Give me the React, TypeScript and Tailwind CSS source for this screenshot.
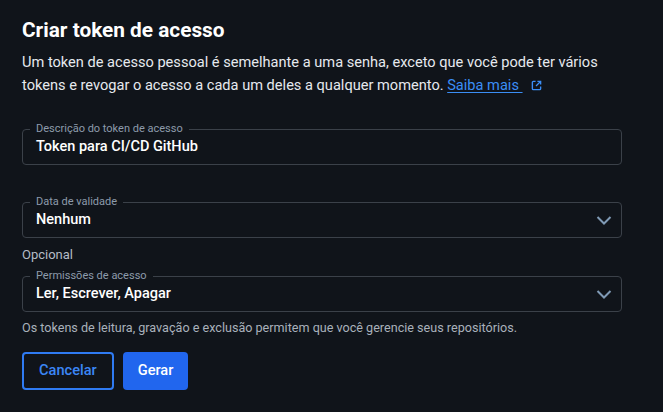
import type { ReactNode } from 'react'

export default function App() {
  return (
    <div className="min-h-screen w-full bg-[#10141a] px-[22px] pt-[16px] font-['Roboto',sans-serif] text-[#f0f3f6]">
      <h1 className="text-[20.8px] font-bold leading-[28px] text-white">Criar token de acesso</h1>
      <p className="mt-[7px] w-[600px] text-[14.6px] leading-[23px] text-[#e6e9ee]">
        Um token de acesso pessoal é semelhante a uma senha, exceto que você pode ter vários tokens e
        revogar o acesso a cada um deles a qualquer momento.{' '}
        <a href="#" className="text-[#3b8ef5] underline underline-offset-2">
          Saiba mais&nbsp;
        </a>
        <span className="ml-[8px] inline-block align-[-1px] text-[#3b8ef5]">
          <ExternalIcon />
        </span>
      </p>

      <Field label="Descrição do token de acesso" className="mt-[25px]">
        <span>Token para CI/CD GitHub</span>
      </Field>

      <Field label="Data de validade" className="mt-[30px]" select>
        <span>Nenhum</span>
      </Field>

      <p className="mt-[7px] text-[13px] leading-[20px] text-[#b4bcc6]">Opcional</p>

      <Field label="Permissões de acesso" className="mt-[4px]" select>
        <span>Ler, Escrever, Apagar</span>
      </Field>

      <p className="mt-[7px] text-[12.6px] leading-[18px] text-[#a9b1bb]">
        Os tokens de leitura, gravação e exclusão permitem que você gerencie seus repositórios.
      </p>

      <div className="mt-[15px] flex gap-[9px]">
        <button className="h-[38px] rounded-[4px] border-2 border-[#2f7bf3] px-[15px] text-[14.6px] font-medium text-[#3b86f6]">
          Cancelar
        </button>
        <button className="h-[38px] rounded-[4px] bg-[#2166ee] px-[15px] text-[14.6px] font-medium text-white">
          Gerar
        </button>
      </div>
    </div>
  )
}

function Field({
  label,
  children,
  className,
  select,
}: {
  label: string
  children: ReactNode
  className?: string
  select?: boolean
}) {
  return (
    <fieldset className={`w-[600px] rounded-[4px] border border-[#3b4149] px-[7px] ${className ?? ''}`}>
      <legend className="px-[6px] text-[11px] leading-[14px] text-[#8d9bab]">{label}</legend>
      <div className="mb-[7px] mt-[1px] flex h-[20px] items-center justify-between px-[6px] text-[14.5px] font-medium leading-[20px] text-white">
        {children}
        {select && (
          <svg width="16" height="16" viewBox="0 0 16 16" className="-mr-[4px] text-[#7f9ab5]">
            <path d="M1.5 5l6.5 6.5L14.5 5" fill="none" stroke="currentColor" strokeWidth="2" />
          </svg>
        )}
      </div>
    </fieldset>
  )
}

function ExternalIcon() {
  return (
    <svg width="11" height="11" viewBox="0 0 12 12" fill="none" stroke="currentColor" strokeWidth="1.5">
      <path d="M5 1.5H2.5a1 1 0 0 0-1 1v7a1 1 0 0 0 1 1h7a1 1 0 0 0 1-1V7" />
      <path d="M7 1.5h3.5V5M10.5 1.5L5.5 6.5" />
    </svg>
  )
}
